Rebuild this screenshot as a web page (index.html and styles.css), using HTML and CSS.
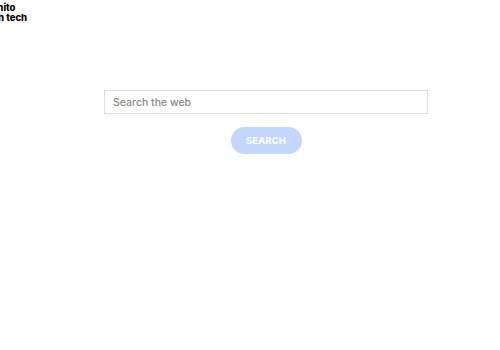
FILE: index.html
```html
<!DOCTYPE html>
<html>
<head>
  <meta charset="UTF-8">
  <meta name="viewport" content="width=device-width, initial-scale=1">
  <title>Incognito Search</title>
  <link rel="stylesheet" href="styles.css">
</head>
<body>
  <div class="logo">Incognito<br>Search tech</div>
  <main class="search">
    <input type="text" class="query" placeholder="Search the web">
    <button class="go">SEARCH</button>
  </main>
</body>
</html>
```

FILE: styles.css
```css
body {
  margin: 0;
  font-family: Inter, "Open Sans", sans-serif;
  background: #ffffff;
  position: relative;
}
.logo {
  position: absolute;
  top: 3px;
  left: -29px;
  font-size: 9.5px;
  font-weight: 800;
  line-height: 10px;
  color: #000000;
}
.search {
  display: flex;
  flex-direction: column;
  align-items: center;
  padding: 90px 0 0 32px;
  gap: 13px;
}
.query {
  box-sizing: border-box;
  width: 324px;
  height: 24px;
  border: 1px solid #dcdcdc;
  padding: 0 8px;
  font-family: Inter, "Open Sans", sans-serif;
  font-size: 10.5px;
  font-weight: 500;
  outline: none;
}
.query::placeholder {
  color: #8a8a8a;
}
.go {
  width: 71px;
  height: 27px;
  border: none;
  border-radius: 14px;
  background: #c3d6fd;
  color: #ffffff;
  font-family: Inter, "Open Sans", sans-serif;
  font-size: 9.5px;
  font-weight: 700;
  letter-spacing: 0.1px;
}
```
